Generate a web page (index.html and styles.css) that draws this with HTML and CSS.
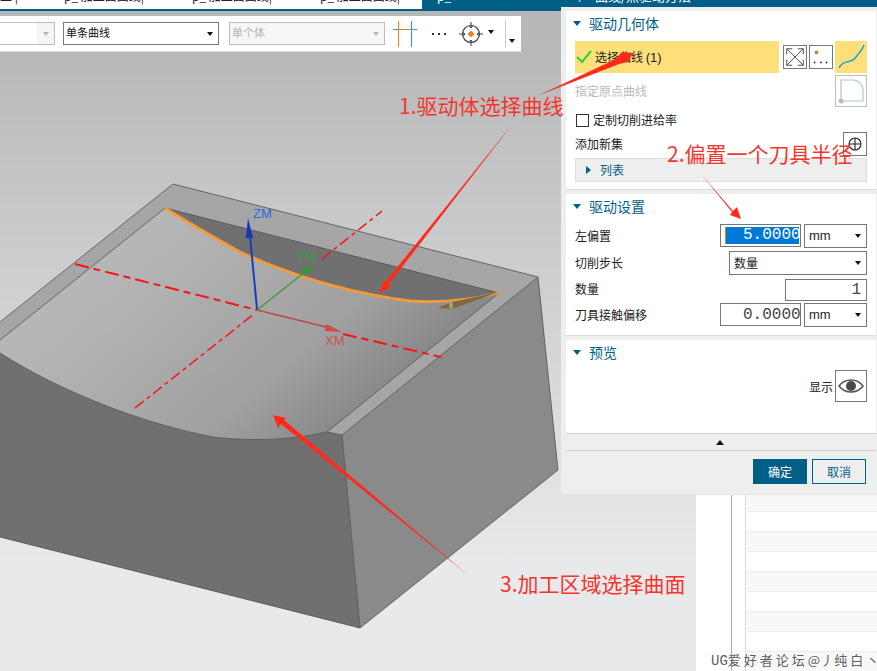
FILE: index.html
```html
<!DOCTYPE html>
<html lang="zh-CN">
<head>
<meta charset="utf-8">
<title>曲线/点驱动方法</title>
<link rel="stylesheet" href="styles.css">
</head>
<body>
<div class="app">
  <svg class="scene" viewBox="0 0 877 671" width="877" height="671" aria-hidden="true">
    <defs>
      <linearGradient id="surf" gradientUnits="userSpaceOnUse" x1="170" y1="230" x2="350" y2="440">
        <stop offset="0" stop-color="#b6b6b6"/>
        <stop offset="0.65" stop-color="#a0a0a0"/>
        <stop offset="1" stop-color="#848484"/>
      </linearGradient>
    </defs>
    <polygon class="face-right" points="342,435 538,277 558,470 360,628"/>
    <path class="face-front" d="M0 353 C60 391 140 423 213 437 C245 441 290 441 327 432 L342 435 L360 628 L0 537 Z"/>
    <path class="face-rim" d="M173 184 L538 277 L342 435 L327 432 L499 293 L165 208 L0 340 L0 322 Z"/>
    <path class="face-wall" d="M165 208 L499 293 C470 300 440 303 410 301 C350 293 290 275 240 252 C215 238 190 224 165 208 Z"/>
    <path class="face-surf" d="M165 208 C190 224 215 238 240 252 C290 275 350 293 410 301 C440 303 470 300 499 293 L327 432 C290 441 245 441 213 437 C140 423 60 391 0 353 L0 340 Z"/>
    <path class="edge" d="M0 322 L173 184 L538 277 L558 470 L360 628 L0 537 M538 277 L342 435 L360 628 M0 340 L165 208 L499 293 L327 432 L342 435 M0 353 C60 391 140 423 213 437 C245 441 290 441 327 432"/>
    <path class="dash-a" d="M75 264 L257 310 M343 334 L441 357"/>
    <path class="dash-b" d="M135 408 L254 314 M322 259 L382 211"/>
    <path class="curve" d="M165 208 C190 224 215 238 240 252 C290 275 350 293 410 301 C440 303 470 300 499 293"/>
    <polygon class="tool" points="499,292 452,302 438,308 452,309"/>
    <ellipse class="tool-disc" cx="451" cy="305" rx="2" ry="4"/>
    <line class="ax-x" x1="257" y1="310" x2="330" y2="328"/>
    <polygon class="ax-x-head" points="342,332 326,324 325,331"/>
    <line class="ax-y" x1="257" y1="310" x2="305" y2="272"/>
    <polygon class="ax-y-head" points="315,265 301,270 304,276"/>
    <line class="ax-z" x1="257" y1="309" x2="250" y2="236"/>
    <polygon class="ax-z-head" points="248,218 253,238 246,238"/>
    <text class="lbl lbl-z" x="253" y="218">ZM</text>
    <text class="lbl lbl-y" x="296" y="261">YM</text>
    <text class="lbl lbl-x" x="325" y="345">XM</text>
  </svg>

  <header class="tabs">
    <div class="tab tab-first"><span>工 |</span></div>
    <div class="tab"><span>p_ 加工面曲线|</span></div>
    <div class="tab"><span>p_ 加工面曲线|</span></div>
    <div class="tab tab-short"><span>p_ 加工面曲线|</span></div>
    <div class="tab tab-active"><span>p_</span></div>
  </header>

  <div class="toolbar">
    <div class="pick pick-off pick-cut"><i class="caret caret-off"></i></div>
    <div class="pick pick-on">单条曲线<i class="caret"></i></div>
    <div class="pick pick-off">单个体<i class="caret caret-off"></i></div>
    <svg class="tb-cross" viewBox="0 0 24 26" width="24" height="26">
      <path class="c-cyan" d="M0 8.500H5M18.500 8.500H24M18.500 0V26"/>
      <path class="c-orange" d="M5.500 0V26M5 8.500H18.500"/>
    </svg>
    <span class="tb-dots"><b></b><b></b><b></b></span>
    <svg class="tb-target" viewBox="0 0 24 24" width="24" height="24">
      <circle class="t-ring" cx="12" cy="12" r="8.500"/>
      <path class="t-arrow" d="M12 0V6M12 18V24M0 12H6M18 12H24M10 3.500L12 6L14 3.500M10 20.500L12 18L14 20.500M3.500 10L6 12L3.500 14M20.500 10L18 12L20.500 14"/>
      <polygon class="t-core" points="12,8.500 15.500,12 12,15.500 8.500,12"/>
    </svg>
    <i class="caret tb-caret"></i>
    <span class="tb-sep"></span>
    <i class="caret tb-end"></i>
  </div>

  <aside class="grid-panel">
    <div class="grid-rows">
      <div class="g-row g-alt g-first"></div>
      <div class="g-row"></div>
      <div class="g-row g-alt"></div>
      <div class="g-row"></div>
      <div class="g-row g-alt"></div>
      <div class="g-row"></div>
      <div class="g-row g-alt"></div>
      <div class="g-row"></div>
      <div class="g-row g-alt"></div>
    </div>
  </aside>

  <section class="dialog">
    <div class="dlg-title"><span class="dlg-pin">↑</span><span class="dlg-name">曲线/点驱动方法</span></div>

    <div class="sec sec-geo">
      <div class="sec-head"><i class="tri-down"></i>驱动几何体</div>
      <div class="row-sel">
        <div class="sel-bar">
          <svg class="check" viewBox="0 0 16 14" width="16" height="14"><path d="M1 7L6 12L15 1"/></svg>
          <span class="lift">选择曲线 <span class="count">(1)</span></span>
        </div>
        <div class="btn24">
          <svg viewBox="0 0 24 24" width="22" height="22"><path class="i-dark" d="M3 3L21 21M21 3L3 21M3 9V3H9M15 3H21V9M3 15V21H9M21 15V21H15"/></svg>
        </div>
        <div class="btn24">
          <svg viewBox="0 0 24 24" width="22" height="22"><circle class="i-org" cx="7" cy="7" r="2"/><circle class="i-fill" cx="5" cy="18" r="1"/><circle class="i-fill" cx="12" cy="18" r="1"/><circle class="i-fill" cx="18" cy="18" r="1"/></svg>
        </div>
        <div class="btn32 btn-yellow">
          <svg viewBox="0 0 32 32" width="32" height="32"><path class="i-curve" d="M4 27C9 17 16 24 21 16C24 11 27 10 29 4"/></svg>
        </div>
      </div>
      <div class="row-origin">
        <span class="muted lift">指定原点曲线</span>
        <div class="btn32 btn-off">
          <svg viewBox="0 0 30 30" width="30" height="30"><path class="i-blue" d="M17 4A10 10 0 0 1 27 14V25H5"/><path class="i-tan" d="M5 25V4H17"/><circle class="i-dot" cx="5" cy="25" r="2.500"/></svg>
        </div>
      </div>
      <label class="row-check"><span class="box"></span><span class="lift">定制切削进给率</span></label>
      <div class="row-add">
        <span class="lift">添加新集</span>
        <div class="btn24">
          <svg viewBox="0 0 22 22" width="22" height="22"><circle class="i-thin" cx="11" cy="11" r="6"/><path class="i-thin" d="M11 5V17M5 11H17"/></svg>
        </div>
      </div>
      <div class="list-bar"><i class="tri-right"></i><span class="lift">列表</span></div>
    </div>

    <div class="sec sec-drive">
      <div class="sec-head"><i class="tri-down"></i>驱动设置</div>
      <div class="row-f row-h24">
        <span class="lift">左偏置</span>
        <div class="fields">
          <div class="num"><span class="cursor"></span><span class="selected">5.00000</span></div>
          <div class="drop drop-unit">mm<i class="caret"></i></div>
        </div>
      </div>
      <div class="row-f row-h24 row-step">
        <span class="lift">切削步长</span>
        <div class="drop drop-wide">数量<i class="caret"></i></div>
      </div>
      <div class="row-f row-h22">
        <span class="lift">数量</span>
        <div class="num num-count">1</div>
      </div>
      <div class="row-f row-h24 row-last">
        <span class="lift">刀具接触偏移</span>
        <div class="fields">
          <div class="num num-plain">0.00000</div>
          <div class="drop drop-unit">mm<i class="caret"></i></div>
        </div>
      </div>
    </div>

    <div class="sec sec-preview">
      <div class="sec-head"><i class="tri-down"></i>预览</div>
      <div class="row-show">
        <span>显示</span>
        <div class="btn32 btn-eye">
          <svg viewBox="0 0 30 30" width="30" height="30"><path class="i-eye" d="M3 15C9 7 21 7 27 15C21 23 9 23 3 15Z"/><circle class="i-pupil" cx="15" cy="15" r="5"/></svg>
        </div>
      </div>
    </div>

    <div class="collapse"><i class="tri-up"></i></div>
    <div class="dlg-foot">
      <button class="btn-ok" type="button">确定</button>
      <button class="btn-no" type="button">取消</button>
    </div>
  </section>

  <svg class="notes" viewBox="0 0 877 671" width="877" height="671" aria-hidden="true">
    <polygon class="note-arrow" points="537,96 614,60 622,52 633,53 628,62 619,64"/>
    <polygon class="note-arrow" points="701,174 733,211 737,207 741,219 730,215 732,212"/>
    <polygon class="note-arrow" points="514,122 387,280 383,282 379,293 390,288 389,284"/>
    <polygon class="note-arrow" points="468,575 284,420 286,418 273,415 278,428 281,424"/>
    <text class="note" x="399" y="114">1.驱动体选择曲线</text>
    <text class="note" x="667" y="162">2.偏置一个刀具半径</text>
    <text class="note" x="500" y="592">3.加工区域选择曲面</text>
  </svg>

  <div class="watermark"><span class="wm-latin">UG</span>爱好者论坛<span class="wm-narrow">@丿</span>纯白丶</div>
</div>
</body>
</html>
```

FILE: styles.css
```css
* { box-sizing: border-box; }

html, body {
  margin: 0;
  padding: 0;
  background: #e6e7e9;
}

.app {
  position: relative;
  width: 877px;
  height: 671px;
  overflow: hidden;
  background: linear-gradient(180deg, #b6b7b8 0, #b8b9ba 60px, #c6c7c9 200px, #e8e9eb 560px);
  font-family: "Noto Sans CJK SC", "Noto Sans", sans-serif;
  font-size: 12px;
  color: #222;
}

.scene, .notes {
  position: absolute;
  left: 0;
  top: 0;
}
.notes { pointer-events: none; }

/* block */
.face-right { fill: #8a8a8a; }
.face-front { fill: #707070; }
.face-rim { fill: #a6a6a6; }
.face-wall { fill: #707070; }
.face-surf { fill: url(#surf); }
.edge { fill: none; stroke: #4f4f4f; stroke-width: 0.8; }
.dash-a { fill: none; stroke: #f5141a; stroke-width: 2; stroke-dasharray: 14 5 7 5; }
.dash-b { fill: none; stroke: #f5141a; stroke-width: 1.5; stroke-dasharray: 11 4 4 4; }
.curve { fill: none; stroke: #f59a3a; stroke-width: 2.8; }
.tool { fill: #7a6a44; }
.tool-disc { fill: #ae9f70; }
.ax-x { stroke: #b84a4a; stroke-width: 1.5; }
.ax-x-head { fill: #d84848; }
.ax-y { stroke: #3f9a35; stroke-width: 1.5; }
.ax-y-head { fill: #2c9a36; }
.ax-z { stroke: #1440c0; stroke-width: 2; }
.ax-z-head { fill: #1038b8; }
.lbl { font-family: "Liberation Sans", sans-serif; font-size: 13px; }
.lbl-z { fill: #2c68e0; }
.lbl-y { fill: #39a040; }
.lbl-x { fill: #d05050; }

/* annotations */
.note-arrow { fill: #ff2a1a; }
.note {
  font-family: "Noto Sans CJK SC", sans-serif;
  font-size: 21px;
  fill: #f5352c;
}

/* document tabs */
.tabs {
  position: relative;
  display: flex;
  height: 11px;
  background: #fff;
  border-bottom: 2px solid #005f87;
  overflow: hidden;
}
.tab {
  flex: none;
  width: 128px;
  height: 9px;
  overflow: hidden;
  font-size: 12px;
  line-height: 12px;
  color: #222;
  white-space: nowrap;
}
.tab-first { width: 64px; }
.tab-short { width: 102px; }
.tab span { display: block; margin-top: -10px; }
.tab-active {
  width: 140px;
  padding-left: 15px;
  background: #005f87;
  color: #fff;
}

/* toolbar */
.toolbar {
  position: relative;
  display: flex;
  align-items: center;
  width: 521px;
  height: 36px;
  margin-top: 5px;
  background: #fff;
  border-bottom: 1px solid #dcdcdc;
}
.pick {
  position: relative;
  flex: none;
  width: 156px;
  height: 23px;
  margin-right: 10px;
  padding-left: 2px;
  border: 1px solid #777;
  font-size: 11px;
  line-height: 19px;
  color: #111;
}
.pick-off {
  margin-right: 8px;
  border-color: #bdbdbd;
  color: #b5b5b5;
  background-color: #f6f6f6;
}
.pick-cut {
  width: 55px;
  border-left: 0;
  background: linear-gradient(90deg, #fff 37px, #f5f5f5 37px);
}
.caret {
  position: absolute;
  right: 5px;
  top: 9px;
  width: 0;
  height: 0;
  border-left: 3.500px solid transparent;
  border-right: 3.500px solid transparent;
  border-top: 4.500px solid #111;
}
.caret-off { border-top-color: #b5b5b5; }
.tb-cross { flex: none; }
.tb-cross path { fill: none; stroke-width: 1; }
.c-cyan { stroke: #17a5c6; }
.c-orange { stroke: #ef7d1a; }
.tb-dots {
  display: flex;
  flex: none;
  gap: 4px;
  width: 14px;
  margin-left: 15px;
}
.tb-dots b {
  flex: none;
  width: 2px;
  height: 2px;
  background: #333;
}
.tb-target { flex: none; margin-left: 13px; }
.t-ring { fill: none; stroke: #444; stroke-width: 1.2; }
.t-arrow { fill: none; stroke: #444; stroke-width: 1; }
.t-core { fill: #ef7d1a; }
.tb-caret {
  position: static;
  flex: none;
  margin-left: 5px;
  margin-bottom: 3px;
}
.tb-sep {
  flex: none;
  width: 1px;
  height: 27px;
  margin-left: 11px;
  background: #ccc;
}
.tb-end {
  position: static;
  flex: none;
  margin-left: 3px;
  margin-top: 14px;
}

/* table behind the dialog */
.grid-panel {
  position: absolute;
  left: 696px;
  top: 494px;
  width: 181px;
  height: 177px;
  padding-left: 51px;
  background: #fff;
  border-top: 1px solid #e6e6e6;
}
.grid-panel::before,
.grid-panel::after {
  content: "";
  position: absolute;
  top: 0;
  bottom: 0;
  width: 1px;
}
.grid-panel::before { left: 35px; background: #a8a8a8; }
.grid-panel::after { left: 49px; background: #dadada; }
.g-row {
  height: 20px;
  border-bottom: 1px solid #ececec;
}
.g-first { height: 17px; }
.g-alt { background: #f8f8f8; }

/* dialog */
.dialog {
  position: absolute;
  left: 561px;
  top: 0;
  width: 316px;
  height: 494px;
  padding: 0 1px 0 5px;
  background: #eee;
}
.dlg-title {
  display: flex;
  height: 7px;
  margin: 0 -1px 4px -5px;
  padding-left: 12px;
  background: #005f87;
  color: #fff;
  overflow: hidden;
}
.dlg-pin, .dlg-name {
  display: block;
  margin-top: -13px;
  font-size: 13px;
  line-height: 18px;
  white-space: nowrap;
}
.dlg-name { margin-left: 9px; }

.lift {
  position: relative;
  top: -1px;
}
.count {
  font-family: "Liberation Sans", sans-serif;
  font-size: 13px;
}

.sec {
  padding: 0 9px 0 9px;
  background: #fff;
  border-bottom: 1px solid #dcdcdc;
  margin-bottom: 4px;
}
.sec-geo { height: 179px; }
.sec-drive { height: 142px; }
.sec-preview { height: 93px; margin-bottom: 0; border-bottom: 0; }

.sec-head {
  display: flex;
  align-items: center;
  height: 24px;
  margin-bottom: 6px;
  margin-left: -2px;
  font-size: 14px;
  color: #005f87;
}
.tri-down {
  flex: none;
  width: 0;
  height: 0;
  margin-right: 8px;
  margin-top: 1px;
  border-left: 4.500px solid transparent;
  border-right: 4.500px solid transparent;
  border-top: 5px solid #005f87;
}
.tri-right {
  flex: none;
  width: 0;
  height: 0;
  margin-right: 9px;
  border-top: 4.500px solid transparent;
  border-bottom: 4.500px solid transparent;
  border-left: 5px solid #005f87;
}
.tri-up {
  width: 0;
  height: 0;
  border-left: 4.500px solid transparent;
  border-right: 4.500px solid transparent;
  border-bottom: 5px solid #111;
}

.row-sel {
  display: flex;
  align-items: center;
  height: 32px;
}
.sel-bar {
  display: flex;
  align-items: center;
  width: 204px;
  height: 32px;
  margin-right: 4px;
  padding-left: 1px;
  background: #ffdf7a;
  color: #222;
}
.check { flex: none; margin-right: 3px; }
.check path { fill: none; stroke: #28d33c; stroke-width: 2; }
.btn24 {
  display: flex;
  flex: none;
  align-items: center;
  justify-content: center;
  width: 24px;
  height: 24px;
  border: 1px solid #777;
  background: #fff;
}
.btn24 + .btn24 { margin-left: 2px; }
.btn32 {
  flex: none;
  width: 32px;
  height: 32px;
  margin-left: 2px;
}
.btn32 svg { display: block; }
.btn-yellow { background: #ffdf7a; }
.btn-off { border: 1px solid #bdbdbd; }
.btn-eye { border: 1px solid #777; margin-left: 2px; }

.i-dark { fill: none; stroke: #444; stroke-width: 1; }
.i-org { fill: #d47a2e; }
.i-fill { fill: #333; }
.i-curve { fill: none; stroke: #1fa6c8; stroke-width: 1.5; }
.i-blue { fill: none; stroke: #a9c9d2; stroke-width: 1.2; }
.i-tan { fill: none; stroke: #c6bbae; stroke-width: 1.2; }
.i-dot { fill: #c6bbae; }
.i-thin { fill: none; stroke: #222; stroke-width: 1.1; }
.i-eye { fill: none; stroke: #555; stroke-width: 1.5; }
.i-pupil { fill: #4a4a4a; }

.row-origin {
  display: flex;
  align-items: center;
  justify-content: space-between;
  height: 32px;
  margin-top: 2px;
}
.muted { color: #b9b9b9; }
.row-check {
  display: flex;
  align-items: center;
  height: 14px;
  margin-top: 6px;
  margin-left: 1px;
}
.box {
  flex: none;
  width: 13px;
  height: 13px;
  margin-right: 4px;
  border: 1px solid #333;
  background: #fff;
}
.row-add {
  display: flex;
  align-items: center;
  justify-content: space-between;
  height: 24px;
  margin-top: 5px;
}
.list-bar {
  display: flex;
  align-items: center;
  height: 24px;
  margin-top: 2px;
  padding-left: 10px;
  background: #eee;
  border: 1px solid #ddd;
  font-size: 12px;
  color: #005f87;
}

.row-f {
  display: flex;
  align-items: center;
  justify-content: space-between;
}
.row-h24 { height: 24px; }
.row-h22 { height: 23px; margin-top: 3px; }
.row-step { margin-top: 3px; }
.row-last { margin-top: 2px; }
.fields { display: flex; gap: 3px; }
.num {
  position: relative;
  display: flex;
  align-items: center;
  width: 81px;
  height: 23px;
  padding-left: 4px;
  border: 1px solid #777;
  background: #fff;
  font-family: "Liberation Mono", monospace;
  font-size: 16px;
  color: #444;
  white-space: nowrap;
  overflow: hidden;
}
.num-plain { padding-left: 22px; }
.num-count {
  justify-content: flex-end;
  width: 82px;
  height: 22px;
  padding: 0 5px 0 0;
  border-color: #777;
}
.cursor {
  flex: none;
  width: 1px;
  height: 17px;
  background: #ef7d1a;
}
.selected {
  flex: none;
  width: 73px;
  height: 17px;
  padding-left: 17px;
  overflow: hidden;
  background: #0078d7;
  color: #fff;
  line-height: 17px;
}
.drop {
  position: relative;
  height: 24px;
  padding-left: 4px;
  border: 1px solid #777;
  background: #fff;
  line-height: 21px;
}
.drop-unit {
  width: 63px;
  font-family: "Liberation Sans", sans-serif;
  font-size: 13px;
}
.drop-wide { width: 138px; }
.drop .caret { right: 5px; top: 9px; }

.row-show {
  display: flex;
  align-items: center;
  justify-content: flex-end;
  height: 32px;
}

.collapse {
  display: flex;
  align-items: center;
  justify-content: center;
  height: 18px;
  border-top: 1px solid #cfcfcf;
  border-bottom: 1px solid #cfcfcf;
  padding-right: 2px;
}
.dlg-foot {
  display: flex;
  justify-content: flex-end;
  gap: 5px;
  padding: 8px 10px 0 0;
}
.btn-ok, .btn-no {
  width: 54px;
  height: 25px;
  padding: 0;
  font-family: "Noto Sans CJK SC", sans-serif;
  font-size: 12px;
  line-height: 21px;
  border: 1px solid #005f87;
}
.btn-ok { background: #005f87; color: #fff; }
.btn-no { background: #eee; color: #005f87; }

.watermark {
  position: absolute;
  left: 711px;
  top: 650px;
  font-size: 13px;
  line-height: 20px;
  letter-spacing: 3px;
  color: #606060;
  white-space: nowrap;
}
.wm-latin {
  letter-spacing: 0;
  font-family: "Liberation Mono", monospace;
  font-size: 14px;
}
.wm-narrow { letter-spacing: 0.500px; }
```
